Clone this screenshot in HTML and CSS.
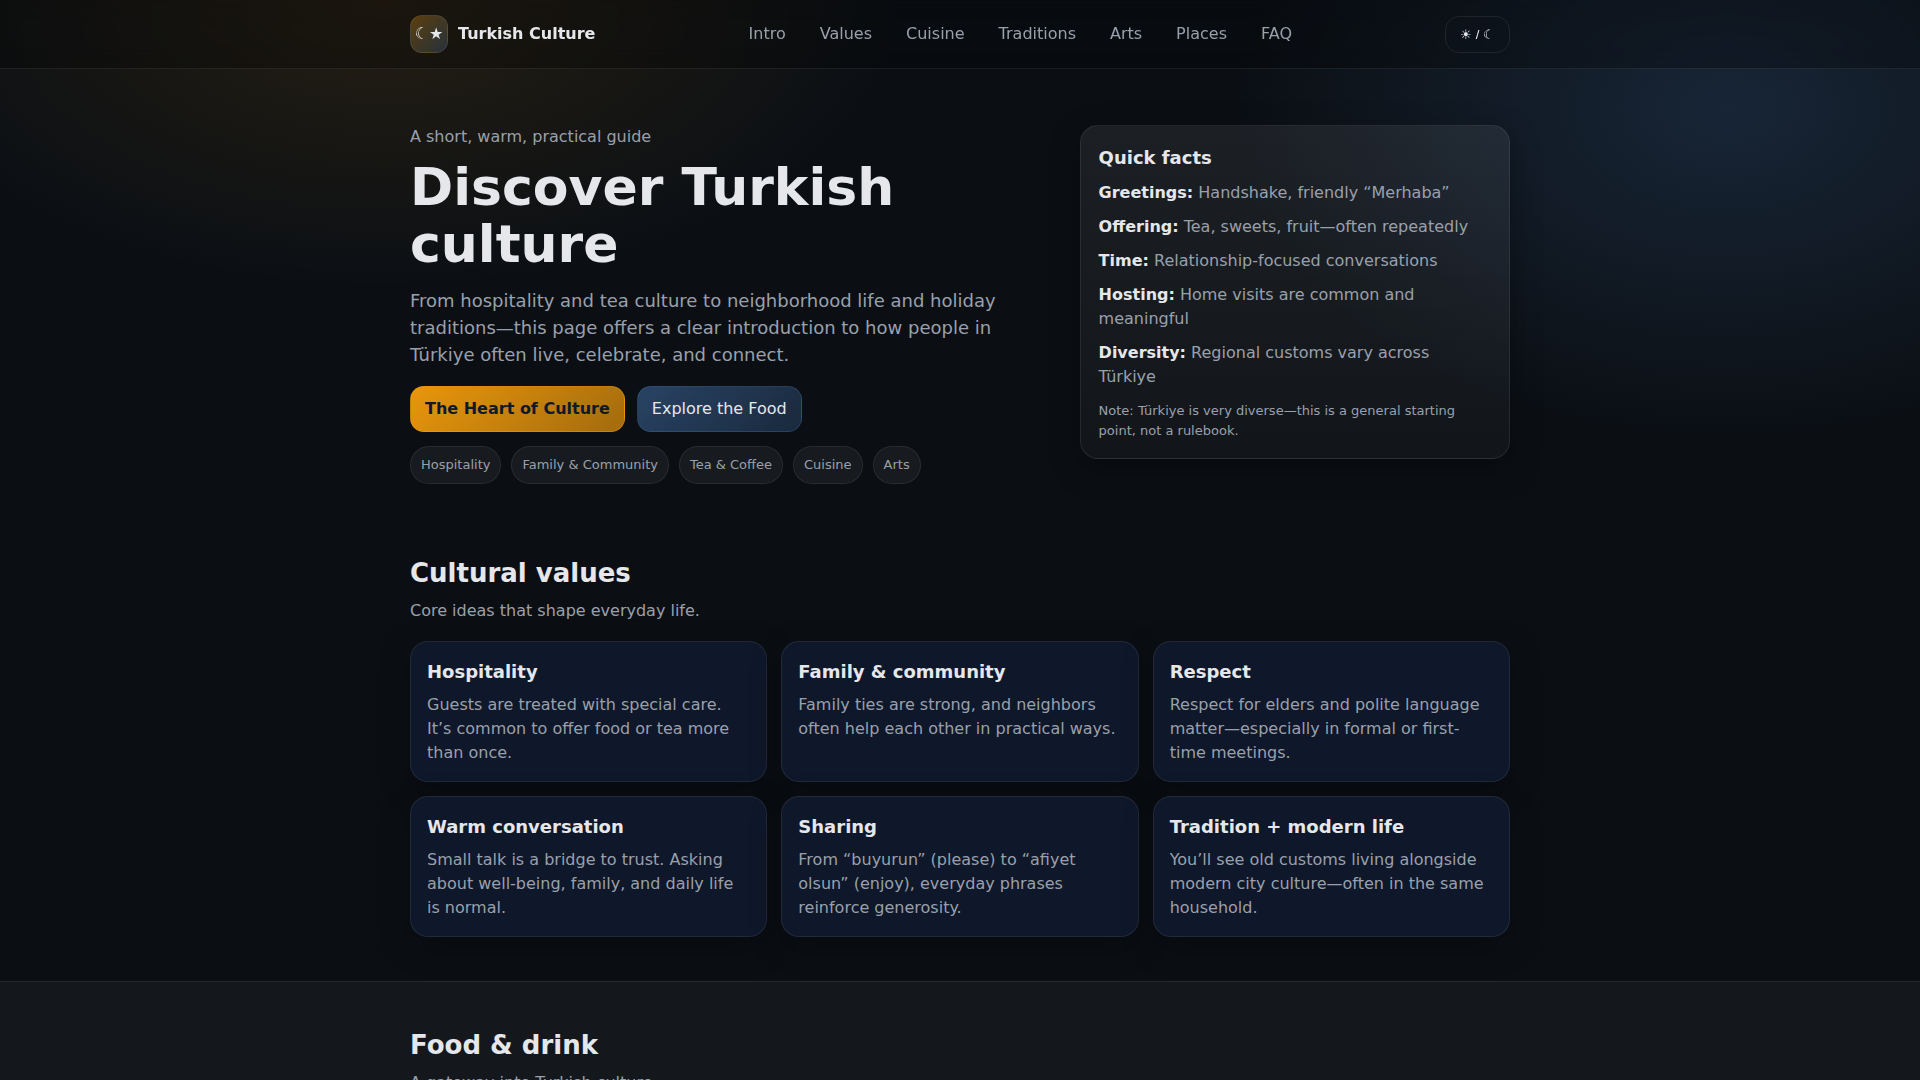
FILE: index.html
```html
<!DOCTYPE html>
<html lang="en">
<head>
    <meta charset="UTF-8">
    <meta name="viewport" content="width=device-width, initial-scale=1.0">
    <title>Turkish Culture</title>
    <link rel="stylesheet" href="styles.css">
</head>
<body>
    <header class="site-header">
        <div class="container header-row">
            <a class="brand" href="#top">
                <span class="brand-mark" aria-hidden="true">☾★</span>
                <span>Turkish Culture</span>
            </a>
            <nav class="nav" aria-label="Main">
                <a href="#intro">Intro</a>
                <a href="#values">Values</a>
                <a href="#cuisine">Cuisine</a>
                <a href="#traditions">Traditions</a>
                <a href="#arts">Arts</a>
                <a href="#places">Places</a>
                <a href="#faq">FAQ</a>
            </nav>
            <button class="theme-toggle" type="button" aria-label="Toggle theme">☀ / ☾</button>
        </div>
    </header>

    <main id="top">
        <section class="hero" id="intro">
            <div class="container hero-grid">
                <div>
                    <p class="kicker">A short, warm, practical guide</p>
                    <h1>Discover Turkish culture</h1>
                    <p class="lead">From hospitality and tea culture to neighborhood life and holiday traditions—this page offers a clear introduction to how people in Türkiye often live, celebrate, and connect.</p>
                    <div class="actions">
                        <a class="btn btn-primary" href="#values">The Heart of Culture</a>
                        <a class="btn btn-secondary" href="#cuisine">Explore the Food</a>
                    </div>
                    <div class="chips">
                        <span class="chip">Hospitality</span>
                        <span class="chip">Family &amp; Community</span>
                        <span class="chip">Tea &amp; Coffee</span>
                        <span class="chip">Cuisine</span>
                        <span class="chip">Arts</span>
                    </div>
                </div>

                <aside class="facts">
                    <h2>Quick facts</h2>
                    <ul>
                        <li><strong>Greetings:</strong> Handshake, friendly “Merhaba”</li>
                        <li><strong>Offering:</strong> Tea, sweets, fruit—often repeatedly</li>
                        <li><strong>Time:</strong> Relationship-focused conversations</li>
                        <li><strong>Hosting:</strong> Home visits are common and meaningful</li>
                        <li><strong>Diversity:</strong> Regional customs vary across Türkiye</li>
                    </ul>
                    <p class="note">Note: Türkiye is very diverse—this is a general starting point, not a rulebook.</p>
                </aside>
            </div>
        </section>

        <section class="section" id="values">
            <div class="container">
                <h2>Cultural values</h2>
                <p class="sub">Core ideas that shape everyday life.</p>
                <div class="cards">
                    <article class="card">
                        <h3>Hospitality</h3>
                        <p>Guests are treated with special care. It’s common to offer food or tea more than once.</p>
                    </article>
                    <article class="card">
                        <h3>Family &amp; community</h3>
                        <p>Family ties are strong, and neighbors often help each other in practical ways.</p>
                    </article>
                    <article class="card">
                        <h3>Respect</h3>
                        <p>Respect for elders and polite language matter—especially in formal or first-time meetings.</p>
                    </article>
                    <article class="card">
                        <h3>Warm conversation</h3>
                        <p>Small talk is a bridge to trust. Asking about well-being, family, and daily life is normal.</p>
                    </article>
                    <article class="card">
                        <h3>Sharing</h3>
                        <p>From “buyurun” (please) to “afiyet olsun” (enjoy), everyday phrases reinforce generosity.</p>
                    </article>
                    <article class="card">
                        <h3>Tradition + modern life</h3>
                        <p>You’ll see old customs living alongside modern city culture—often in the same household.</p>
                    </article>
                </div>
            </div>
        </section>

        <section class="section section-alt" id="cuisine">
            <div class="container">
                <h2>Food &amp; drink</h2>
                <p class="sub">A gateway into Turkish culture.</p>
            </div>
        </section>
    </main>
</body>
</html>
```
FILE: styles.css
```css
:root {
    --bg: #0b0f14;
    --card: #0f172a;
    --text: #e5e7eb;
    --muted: #9aa0ab;
    --line: rgba(255, 255, 255, 0.08);
    --shadow: 0 10px 30px rgba(0, 0, 0, 0.35);
}

* {
    box-sizing: border-box;
}

body {
    margin: 0;
    font-family: "DejaVu Sans", sans-serif;
    font-size: 16px;
    line-height: 1.5;
    color: var(--text);
    background:
        radial-gradient(900px 500px at 20% 0%, rgba(245, 158, 11, 0.11), transparent 58%),
        radial-gradient(900px 600px at 90% 10%, rgba(96, 165, 250, 0.15), transparent 55%),
        var(--bg);
    background-attachment: fixed;
}

h1, h2, h3, p, ul {
    margin: 0;
}

a {
    color: inherit;
    text-decoration: none;
}

.container {
    width: 100%;
    max-width: 1140px;
    margin: 0 auto;
    padding: 0 20px;
}

/* Header */
.site-header {
    position: sticky;
    top: 0;
    z-index: 10;
    background: rgba(0, 0, 0, 0.25);
    border-bottom: 1px solid var(--line);
    backdrop-filter: blur(10px);
}

.header-row {
    display: flex;
    align-items: center;
    justify-content: space-between;
    padding-top: 14px;
    padding-bottom: 14px;
}

.brand {
    display: flex;
    align-items: center;
    gap: 10px;
    font-weight: bold;
}

.brand-mark {
    display: grid;
    place-items: center;
    width: 38px;
    height: 38px;
    border: 1px solid var(--line);
    border-radius: 12px;
    background: linear-gradient(135deg, rgba(245, 158, 11, 0.3), rgba(96, 165, 250, 0.2));
}

.nav {
    display: flex;
    gap: 14px;
}

.nav a {
    padding: 8px 10px;
    color: var(--muted);
    border-radius: 10px;
}

.nav a:hover {
    color: var(--text);
}

.theme-toggle {
    padding: 10px 14px;
    font-family: "Liberation Sans", sans-serif;
    font-size: 13px;
    color: var(--text);
    background: transparent;
    border: 1px solid var(--line);
    border-radius: 14px;
    cursor: pointer;
}

/* Hero */
.hero {
    padding: 56px 0 26px;
}

.hero-grid {
    display: grid;
    grid-template-columns: 3fr 2fr;
    gap: 24px;
    align-items: start;
}

.kicker {
    margin-bottom: 10px;
    color: var(--muted);
}

h1 {
    margin-bottom: 14px;
    font-size: 52px;
    line-height: 1.1;
}

.lead {
    margin-bottom: 18px;
    font-size: 18px;
    color: var(--muted);
}

.actions {
    display: flex;
    flex-wrap: wrap;
    gap: 12px;
    margin-bottom: 14px;
}

.btn {
    padding: 10px 14px;
    border: 1px solid var(--line);
    border-radius: 14px;
}

.btn-primary {
    font-weight: bold;
    color: #111827;
    border-color: rgba(245, 158, 11, 0.35);
    background: linear-gradient(135deg, rgba(245, 158, 11, 0.95), rgba(245, 158, 11, 0.65));
}

.btn-secondary {
    border-color: rgba(96, 165, 250, 0.15);
    background: linear-gradient(135deg, rgba(96, 165, 250, 0.35), rgba(96, 165, 250, 0.18));
}

.chips {
    display: flex;
    flex-wrap: wrap;
    gap: 10px;
}

.chip {
    padding: 8px 10px;
    font-size: 13px;
    color: var(--muted);
    background: rgba(255, 255, 255, 0.05);
    border: 1px solid var(--line);
    border-radius: 999px;
}

.facts {
    padding: 18px;
    background: linear-gradient(180deg, rgba(255, 255, 255, 0.07), rgba(255, 255, 255, 0.03));
    border: 1px solid var(--line);
    border-radius: 18px;
    box-shadow: var(--shadow);
}

.facts h2 {
    margin-bottom: 10px;
    font-size: 18px;
}

.facts ul {
    display: grid;
    gap: 10px;
    padding: 0;
    list-style: none;
    color: var(--muted);
}

.facts strong {
    color: var(--text);
}

.note {
    margin-top: 12px;
    font-size: 13px;
    color: var(--muted);
}

/* Sections */
.section {
    padding: 44px 0;
}

.section-alt {
    background: rgba(255, 255, 255, 0.04);
    border-top: 1px solid var(--line);
    border-bottom: 1px solid var(--line);
}

.section h2 {
    margin-bottom: 6px;
    font-size: 26px;
}

.sub {
    margin-bottom: 18px;
    color: var(--muted);
}

.cards {
    display: grid;
    grid-template-columns: repeat(3, 1fr);
    gap: 14px;
}

.card {
    padding: 16px;
    background: var(--card);
    border: 1px solid var(--line);
    border-radius: 18px;
    box-shadow: var(--shadow);
}

.card h3 {
    margin-bottom: 8px;
    font-size: 18px;
}

.card p {
    color: var(--muted);
}

@media (max-width: 900px) {
    .nav {
        display: none;
    }

    .hero-grid, .cards {
        grid-template-columns: 1fr;
    }
}
```
